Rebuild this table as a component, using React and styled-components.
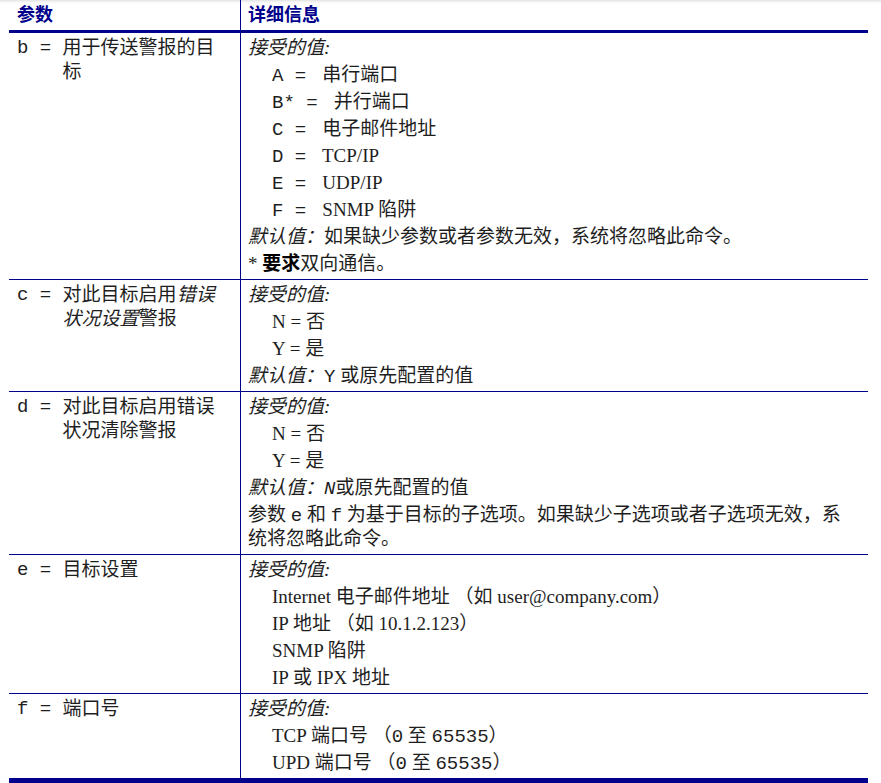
import React from "react";
import styled, { createGlobalStyle } from "styled-components";

const NAVY = "#00008c";

const Global = createGlobalStyle`
  html, body { margin: 0; padding: 0; background: #fff; }
  body {
    font-family: "Liberation Serif", "Noto Sans CJK SC", serif;
    color: #1e1e1e;
  }
`;

const Page = styled.div`
  background: linear-gradient(to bottom, #e2e2e2 0px, #f6f6f6 2px, #fff 4px);
  padding-left: 9px;
  min-height: 783px;
  box-sizing: border-box;
`;

const Table = styled.div`
  width: 859px;
  font-size: 19px;
  line-height: 24px;
`;

const HeaderRow = styled.div`
  display: grid;
  grid-template-columns: 232px 1fr;
  height: 30px;
  border-bottom: 3px solid ${NAVY};
`;

const HeaderCell = styled.div`
  font-family: "Noto Sans CJK SC", "Liberation Sans", sans-serif;
  font-weight: 700;
  font-size: 18px;
  line-height: 27px;
  color: ${NAVY};
  padding-left: ${(p) => (p.$first ? 8 : 7)}px;
  border-right: ${(p) => (p.$first ? `1px solid ${NAVY}` : "none")};
`;

const Row = styled.div`
  display: grid;
  grid-template-columns: 232px 1fr;
  border-bottom: ${(p) => (p.$last ? 5 : 1)}px solid ${NAVY};
`;

const ParamCell = styled.div`
  display: flex;
  align-items: flex-start;
  padding: 3px 17px 3px 8px;
  border-right: 1px solid ${NAVY};
`;

const Label = styled.span`
  font-family: "Liberation Mono", monospace;
  white-space: pre;
  flex: none;
`;

const ParamText = styled.div`
  flex: 1;
  min-width: 0;
`;

const DetailCell = styled.div`
  padding: 3px 16px 3px 7px;
`;

const Para = styled.p`
  margin: 0 0 3px;
  padding-left: ${(p) => (p.$indent ? 24 : 0)}px;
  &:last-child { margin-bottom: 0; }
`;

const Code = styled.span`
  font-family: "Liberation Mono", monospace;
  white-space: pre;
  line-height: 18px;
`;

const Em = styled.em`
  font-style: italic;
  line-height: 18px;
`;

const Strong = styled.strong`
  font-family: "Noto Sans CJK SC", sans-serif;
  font-weight: 700;
  color: #000;
  line-height: 18px;
`;

const Accepted = () => (
  <Para>
    <Em>接受的值:</Em>
  </Para>
);

export default function App() {
  return (
    <>
      <Global />
      <Page>
        <Table>
          <HeaderRow>
            <HeaderCell $first>参数</HeaderCell>
            <HeaderCell>详细信息</HeaderCell>
          </HeaderRow>

          <Row>
            <ParamCell>
              <Label>b = </Label>
              <ParamText>用于传送警报的目标</ParamText>
            </ParamCell>
            <DetailCell>
              <Accepted />
              <Para $indent><Code>A = </Code> 串行端口</Para>
              <Para $indent><Code>B* = </Code> 并行端口</Para>
              <Para $indent><Code>C = </Code> 电子邮件地址</Para>
              <Para $indent><Code>D = </Code> TCP/IP</Para>
              <Para $indent><Code>E = </Code> UDP/IP</Para>
              <Para $indent><Code>F = </Code> SNMP 陷阱</Para>
              <Para><Em>默认值：</Em>如果缺少参数或者参数无效，系统将忽略此命令。</Para>
              <Para>* <Strong>要求</Strong>双向通信。</Para>
            </DetailCell>
          </Row>

          <Row>
            <ParamCell>
              <Label>c = </Label>
              <ParamText>对此目标启用<Em>错误状况设置</Em>警报</ParamText>
            </ParamCell>
            <DetailCell>
              <Accepted />
              <Para $indent>N = 否</Para>
              <Para $indent>Y = 是</Para>
              <Para><Em>默认值：</Em><Code>Y</Code> 或原先配置的值</Para>
            </DetailCell>
          </Row>

          <Row>
            <ParamCell>
              <Label>d = </Label>
              <ParamText>对此目标启用错误状况清除警报</ParamText>
            </ParamCell>
            <DetailCell>
              <Accepted />
              <Para $indent>N = 否</Para>
              <Para $indent>Y = 是</Para>
              <Para><Em>默认值：<Code>N</Code></Em>或原先配置的值</Para>
              <Para>参数 <Code>e</Code> 和 <Code>f</Code> 为基于目标的子选项。如果缺少子选项或者子选项无效，系统将忽略此命令。</Para>
            </DetailCell>
          </Row>

          <Row>
            <ParamCell>
              <Label>e = </Label>
              <ParamText>目标设置</ParamText>
            </ParamCell>
            <DetailCell>
              <Accepted />
              <Para $indent>Internet 电子邮件地址 （如 user@company.com）</Para>
              <Para $indent>IP 地址 （如 10.1.2.123）</Para>
              <Para $indent>SNMP 陷阱</Para>
              <Para $indent>IP 或 IPX 地址</Para>
            </DetailCell>
          </Row>

          <Row $last>
            <ParamCell>
              <Label>f = </Label>
              <ParamText>端口号</ParamText>
            </ParamCell>
            <DetailCell>
              <Accepted />
              <Para $indent>TCP 端口号 （<Code>0</Code> 至 <Code>65535</Code>）</Para>
              <Para $indent>UPD 端口号 （<Code>0</Code> 至 <Code>65535</Code>）</Para>
            </DetailCell>
          </Row>
        </Table>
      </Page>
    </>
  );
}
